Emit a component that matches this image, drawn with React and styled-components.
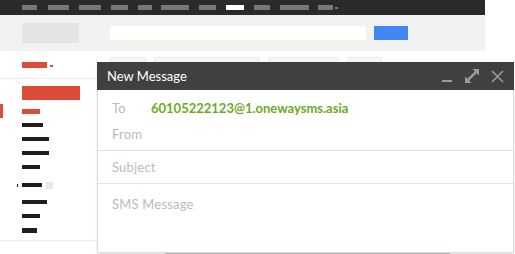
import React from 'react'
import styled, {createGlobalStyle} from 'styled-components'

const GlobalStyle = createGlobalStyle`
    html, body {
        margin: 0;
        padding: 0;
        background: #ffffff;
    }
    body {
        font-family: Lato, "Open Sans", "Liberation Sans", sans-serif;
    }
`;

const Page = styled.div`
    position: relative;
    width: 515px;
    height: 254px;
    overflow: hidden;
    background: #ffffff;
`;

const TopBar = styled.div`
    width: 485px;
    height: 15px;
    background: #2a2a2a;
    display: flex;
    align-items: center;
    padding-left: 22px;
    box-sizing: border-box;
`;

const NavItem = styled.span`
    display: block;
    width: ${p => p.w}px;
    height: 5px;
    margin-right: ${p => p.gap}px;
    background: ${p => p.active ? '#ffffff' : '#777777'};
`;

const NavDot = styled.span`
    display: block;
    width: 3px;
    height: 2px;
    margin-left: 2px;
    background: #777777;
`;

const Masthead = styled.div`
    width: 485px;
    height: 36px;
    background: #f2f2f2;
    display: flex;
    align-items: center;
    padding-left: 22px;
    box-sizing: border-box;
`;

const Logo = styled.div`
    width: 57px;
    height: 20px;
    background: #e4e4e4;
`;

const Search = styled.div`
    width: 256px;
    height: 14px;
    margin-left: 31px;
    background: #fffffa;
`;

const SearchButton = styled.div`
    width: 34px;
    height: 14px;
    margin-left: 8px;
    background: #4285f4;
`;

const Main = styled.div`
    display: flex;
`;

const Sidebar = styled.div`
    width: 97px;
    display: flex;
    flex-direction: column;
`;

const SidebarHead = styled.div`
    height: 27px;
    border-bottom: 1px solid #ececec;
    display: flex;
    align-items: center;
    padding-left: 22px;
`;

const Bar = styled.span`
    display: block;
    width: ${p => p.w}px;
    height: ${p => p.h || 4}px;
    background: ${p => p.red ? '#dd4b39' : '#1e1e1e'};
`;

const RedDot = styled.span`
    display: block;
    width: 3px;
    height: 2px;
    margin-left: 3px;
    margin-top: 2px;
    background: #dd4b39;
`;

const ComposeButton = styled.div`
    width: 58px;
    height: 14px;
    margin: 7px 0 4px 22px;
    background: #dd4b39;
`;

const NavRow = styled.div`
    position: relative;
    height: 14px;
    margin-top: ${p => p.mt || 0}px;
    display: flex;
    align-items: center;
    padding-left: 19px;
    border-left: 3px solid ${p => p.selected ? '#dd4b39' : 'transparent'};
`;

const Marker = styled.span`
    position: absolute;
    left: 14px;
    width: 1px;
    height: 3px;
    background: #1e1e1e;
`;

const Chip = styled.span`
    display: block;
    width: 7px;
    height: 7px;
    margin-left: 4px;
    background: #e8e8e8;
`;

const SidebarFoot = styled.div`
    margin-top: 3px;
    border-top: 1px solid #ececec;
`;

const Content = styled.div`
    flex: 1;
`;

const Tabs = styled.div`
    display: flex;
    padding: 6px 0 0 13px;
    gap: 8px;
`;

const Tab = styled.div`
    width: ${p => p.w}px;
    height: 20px;
    background: #f7f7f7;
    border: 1px solid #eeeeee;
    box-sizing: border-box;
`;

const Strip = styled.div`
    position: absolute;
    left: 165px;
    bottom: 0;
    width: 285px;
    height: 2px;
    background: #b9c6c2;
`;

const Compose = styled.div`
    position: absolute;
    left: 97px;
    top: 62px;
    width: 417px;
    height: 191px;
    background: #ffffff;
    border: 1px solid #dcdcdc;
    border-top: none;
    box-sizing: border-box;
    display: flex;
    flex-direction: column;
    box-shadow: 0 1px 2px rgba(0, 0, 0, 0.12);
`;

const Header = styled.div`
    height: 28px;
    margin: 0 -1px;
    background: #404040;
    display: flex;
    align-items: center;
    padding: 0 10px 0 10px;
    color: #ffffff;
    font-size: 13px;
`;

const Title = styled.span`
    flex: 1;
`;

const Icons = styled.div`
    display: flex;
    align-items: center;
    gap: 12px;
    color: #9b9b9b;
`;

const Recipients = styled.div`
    padding: 10px 0 8px 14px;
    display: flex;
    flex-direction: column;
    gap: 10px;
    border-bottom: 1px solid #e4e4e4;
`;

const Row = styled.div`
    display: flex;
    align-items: center;
    height: 16px;
`;

const Label = styled.span`
    width: 39px;
    color: #bbbbbb;
    font-size: 13px;
    letter-spacing: 0.2px;
`;

const Address = styled.span`
    color: #69ab1f;
    font-size: 13px;
    font-weight: 700;
`;

const Field = styled.div`
    height: ${p => p.h}px;
    padding: ${p => p.pt || 0}px 0 0 14px;
    line-height: ${p => p.lh}px;
    color: #bbbbbb;
    font-size: 13px;
    letter-spacing: 0.2px;
    border-bottom: ${p => p.line ? '1px solid #e4e4e4' : 'none'};
    box-sizing: ${p => p.line ? 'content-box' : 'border-box'};
`;

const navItems = [
    [15, 11], [21, 10], [22, 10], [17, 10], [14, 9], [28, 10],
    [17, 10], [18, 10, true], [16, 10], [29, 9], [15, 0],
];

const Minimize = () => (
    <svg width="11" height="14" viewBox="0 0 11 14">
        <rect x="0" y="11" width="10" height="2" fill="currentColor"/>
    </svg>
);

const Expand = () => (
    <svg width="14" height="14" viewBox="0 0 15 15">
        <path d="M15 0 L15 7 L8 0 Z" fill="currentColor"/>
        <path d="M0 15 L0 8 L7 15 Z" fill="currentColor"/>
        <path d="M3 12 L12 3" stroke="currentColor" strokeWidth="2.8"/>
    </svg>
);

const Close = () => (
    <svg width="13" height="13" viewBox="0 0 13 13">
        <path d="M1 1 L12 12 M12 1 L1 12" stroke="currentColor" strokeWidth="1.6"/>
    </svg>
);

const App = () => {
    return <>
        <GlobalStyle/>
        <Page>
            <TopBar>
                {navItems.map(([w, gap, active], i) =>
                    <NavItem key={i} w={w} gap={gap} active={active}/>
                )}
                <NavDot/>
            </TopBar>

            <Masthead>
                <Logo/>
                <Search/>
                <SearchButton/>
            </Masthead>

            <Main>
                <Sidebar>
                    <SidebarHead>
                        <Bar red w={25} h={6}/>
                        <RedDot/>
                    </SidebarHead>
                    <ComposeButton/>
                    <NavRow selected><Bar red w={18} h={5}/></NavRow>
                    <NavRow><Bar w={21}/></NavRow>
                    <NavRow><Bar w={27}/></NavRow>
                    <NavRow><Bar w={27}/></NavRow>
                    <NavRow><Bar w={18}/></NavRow>
                    <NavRow mt={4}><Marker/><Bar w={20}/><Chip/></NavRow>
                    <NavRow mt={3}><Bar w={25}/></NavRow>
                    <NavRow><Bar w={18}/></NavRow>
                    <NavRow><Bar w={15} h={5}/></NavRow>
                    <SidebarFoot/>
                </Sidebar>

                <Content>
                    <Tabs>
                        <Tab w={36}/>
                        <Tab w={106}/>
                        <Tab w={71}/>
                        <Tab w={35}/>
                    </Tabs>
                </Content>
            </Main>

            <Strip/>

            <Compose>
                <Header>
                    <Title>New Message</Title>
                    <Icons>
                        <Minimize/>
                        <Expand/>
                        <Close/>
                    </Icons>
                </Header>
                <Recipients>
                    <Row>
                        <Label>To</Label>
                        <Address>60105222123@1.onewaysms.asia</Address>
                    </Row>
                    <Row>
                        <Label>From</Label>
                    </Row>
                </Recipients>
                <Field line h={32} lh={32}>Subject</Field>
                <Field h={60} lh={16} pt={12}>SMS Message</Field>
            </Compose>
        </Page>
    </>
};

export default App;
